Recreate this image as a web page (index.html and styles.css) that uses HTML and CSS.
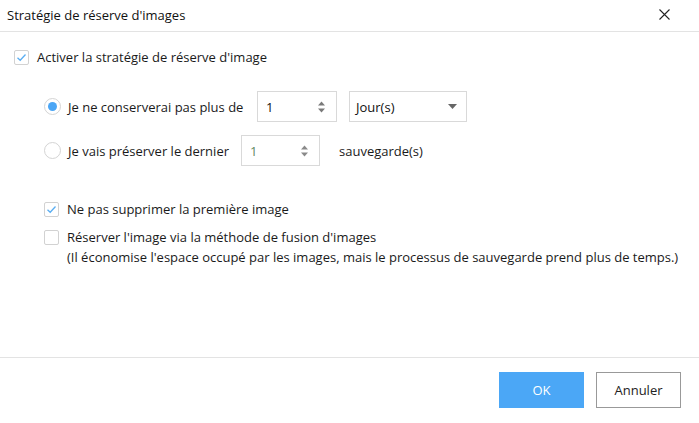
FILE: index.html
```html
<!DOCTYPE html>
<html lang="fr">
<head>
<meta charset="utf-8">
<title>Stratégie de réserve d'images</title>
<link rel="stylesheet" href="styles.css">
</head>
<body>
<div class="dialog">
  <div class="header">
    <span class="title">Stratégie de réserve d'images</span>
    <span class="close"><svg width="11" height="11" viewBox="0 0 11 11"><path d="M0.5 0.5 L10.5 10.5 M10.5 0.5 L0.5 10.5" stroke="#222" stroke-width="1.1" fill="none"/></svg></span>
  </div>
  <div class="content">
    <div class="check-row main">
      <span class="checkbox checked"><svg width="11" height="9" viewBox="0 0 11 9"><path d="M1.5 4.8 L4.2 7.3 L9.5 1.5" stroke="#5aaef2" stroke-width="1.3" fill="none"/></svg></span>
      <span class="label">Activer la stratégie de réserve d'image</span>
    </div>
    <div class="options">
      <div class="radio-row first">
        <span class="radio on"><span class="dot"></span></span>
        <span class="label rlabel1">Je ne conserverai pas plus de</span>
        <span class="spin w1"><span class="val">1</span><span class="arrows"><svg width="7" height="12" viewBox="0 0 7 12"><path d="M3.5 0.5 L7 4.5 L0 4.5 Z M0 7.5 L7 7.5 L3.5 11.5 Z" fill="#7a7a7a"/></svg></span></span>
        <span class="select"><span class="val">Jour(s)</span><svg width="9" height="5" viewBox="0 0 9 5"><path d="M0 0 L9 0 L4.5 5 Z" fill="#666"/></svg></span>
      </div>
      <div class="radio-row second">
        <span class="radio"></span>
        <span class="label rlabel2">Je vais préserver le dernier</span>
        <span class="spin w2 disabled"><span class="val">1</span><span class="arrows"><svg width="7" height="12" viewBox="0 0 7 12"><path d="M3.5 0.5 L7 4.5 L0 4.5 Z M0 7.5 L7 7.5 L3.5 11.5 Z" fill="#8a8a8a"/></svg></span></span>
        <span class="label">sauvegarde(s)</span>
      </div>
      <div class="check-row sub first-sub">
        <span class="checkbox checked"><svg width="11" height="9" viewBox="0 0 11 9"><path d="M1.5 4.8 L4.2 7.3 L9.5 1.5" stroke="#5aaef2" stroke-width="1.3" fill="none"/></svg></span>
        <span class="label">Ne pas supprimer la première image</span>
      </div>
      <div class="check-row sub second-sub">
        <span class="checkbox"></span>
        <span class="label multi">Réserver l'image via la méthode de fusion d'images<br>(Il économise l'espace occupé par les images, mais le processus de sauvegarde prend plus de temps.)</span>
      </div>
    </div>
  </div>
  <div class="footer">
    <button class="btn primary">OK</button>
    <button class="btn">Annuler</button>
  </div>
</div>
</body>
</html>
```

FILE: styles.css
```css
html, body {
  margin: 0;
  padding: 0;
  background: #fff;
}
body {
  font-family: "Open Sans", "Noto Sans", sans-serif;
  font-size: 13px;
  color: #1a1a1a;
}
.dialog {
  width: 699px;
  height: 423px;
  display: flex;
  flex-direction: column;
  background: #fff;
}
.header {
  height: 32px;
  box-sizing: border-box;
  border-bottom: 1px solid #e3e3e3;
  display: flex;
  align-items: center;
  justify-content: space-between;
  padding: 0 29px 2px 7px;
}
.title {
  font-size: 13px;
  color: #111;
}
.close {
  display: flex;
}
.content {
  flex: 1;
  padding: 18px 0 0 14px;
}
.check-row {
  display: flex;
  align-items: flex-start;
}
.checkbox {
  width: 15px;
  height: 15px;
  border: 1px solid #d2d2d2;
  border-radius: 2px;
  box-sizing: border-box;
  display: flex;
  align-items: center;
  justify-content: center;
  flex: none;
}
.check-row .label {
  margin-left: 8px;
  line-height: 15px;
}
.label {
  font-size: 13px;
  color: #1a1a1a;
  white-space: nowrap;
}
.label.multi {
  line-height: 20px;
  margin-top: -3px;
}
.options {
  padding-left: 30px;
}
.radio-row {
  display: flex;
  align-items: center;
  height: 31px;
}
.radio-row.first {
  margin-top: 26px;
}
.radio-row.second {
  margin-top: 13px;
}
.radio {
  width: 17px;
  height: 17px;
  box-sizing: border-box;
  border: 1px solid #d4d4d4;
  border-radius: 50%;
  display: flex;
  align-items: center;
  justify-content: center;
  flex: none;
}
.radio .dot {
  width: 9px;
  height: 9px;
  border-radius: 50%;
  background: #4ba6f5;
}
.radio-row .label {
  margin-left: 7px;
}
.rlabel1 {
  width: 189px;
}
.rlabel2 {
  width: 173px;
}
.spin {
  height: 31px;
  box-sizing: border-box;
  border: 1px solid #d9d9d9;
  display: flex;
  align-items: center;
  justify-content: space-between;
  padding: 0 11px 0 8px;
  flex: none;
}
.spin.w1 {
  width: 80px;
}
.spin.w2 {
  width: 79px;
  margin-right: 12px;
}
.spin .val {
  font-size: 13px;
  color: #111;
}
.spin.disabled .val {
  color: #5f8a63;
}
.arrows {
  display: flex;
}
.select {
  width: 118px;
  height: 31px;
  margin-left: 12px;
  box-sizing: border-box;
  border: 1px solid #d9d9d9;
  display: flex;
  align-items: center;
  justify-content: space-between;
  padding: 0 9px 0 6px;
}
.select .val {
  font-size: 13px;
  color: #111;
}
.check-row.sub {
  margin-left: 0;
}
.first-sub {
  margin-top: 36px;
}
.second-sub {
  margin-top: 13px;
}
.footer {
  height: 66px;
  box-sizing: border-box;
  border-top: 1px solid #e3e3e3;
  display: flex;
  justify-content: flex-end;
  align-items: flex-start;
  padding: 14px 18px 0 0;
  gap: 12px;
}
.btn {
  width: 85px;
  height: 36px;
  box-sizing: border-box;
  border: 1px solid #999;
  background: #fff;
  font-family: "Open Sans", "Noto Sans", sans-serif;
  font-size: 13px;
  color: #222;
  padding: 0;
}
.btn.primary {
  background: #4ba7f6;
  border-color: #4ba7f6;
  color: #fff;
}
```
